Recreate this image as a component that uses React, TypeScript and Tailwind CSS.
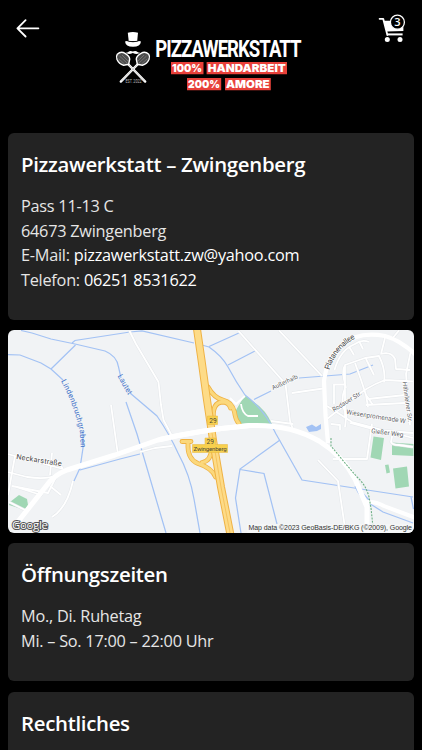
import React from "react";

const Logo = () => {
  return (
    <svg width="210" height="80" viewBox="100 20 210 80" className="block">
      {/* top hat and moustache */}
      <g fill="#fff">
        <path d="M127.8 32.8 Q132.8 31.2 138 32.8 L137.2 41 H128.7 Z" />
        <path d="M125 41.4 Q127 40.4 128.2 41.4 Q133 42.8 137.6 41.4 Q139 40.4 141 41.4 Q140.4 46.6 133 46.8 Q125.6 46.6 125 41.4 Z" />
        <path d="M132.8 51.6 Q135.5 50 137.6 52 Q138.4 53 140.4 52.8 Q137 55 132.8 53 Q128.6 55 125.4 52.8 Q127.4 53 128.2 52 Q130.2 50 132.8 51.6 Z" />
      </g>
      <path d="M128.6 41.2 Q133 42.4 137.4 41.2" fill="none" stroke="#222" strokeWidth=".7" />
      {/* crossed pizza peels */}
      <g stroke="#fff" strokeWidth="2.4" strokeLinecap="round">
        <path d="M127.5 63.5 L145.2 81.6" />
        <path d="M138.5 63.5 L120.8 81.6" />
      </g>
      <path d="M127.6 63.8 L144.6 81.1 M138.4 63.8 L121.4 81.1" stroke="#777" strokeWidth=".4" />
      <g fill="#4d4d4d" stroke="#fff" strokeWidth="1.4" strokeLinejoin="round">
        <path d="M117.3 54.2 Q121 50.8 125 53.4 Q129.5 56 129.7 59 L128.7 64.2 L123.6 65.2 Q119 64 117 59.5 Q115.8 56.3 117.3 54.2 Z" />
        <path d="M148.7 54.2 Q145 50.8 141 53.4 Q136.5 56 136.3 59 L137.3 64.2 L142.4 65.2 Q147 64 149 59.5 Q150.2 56.3 148.7 54.2 Z" />
      </g>
      <path
        d="M119.5 56 L127 63 M122 55 L128 61 M119 59 L124.5 64 M146.5 56 L139 63 M144 55 L138 61 M147 59 L141.5 64"
        stroke="#8b8b8b"
        strokeWidth=".6"
      />
      <text transform="translate(125.4 83.4) scale(.8 1)" fontSize="4.6" fill="#bbb" fontFamily="Roboto, sans-serif">
        EST. 2022
      </text>
      <text transform="translate(155.2 56.6) scale(.75 1)" fontSize="24.8" fontWeight="700" textLength="195" fill="#fff" fontFamily="Roboto, sans-serif">
        PIZZAWERKSTATT
      </text>
      <g fill="#e8413a">
        <path d="M171 62 H203.5 V74.2 H171 Z M206.6 62 H287 V74.2 H206.6 Z" />
        <path d="M187 78 H221.2 V90.2 H187 Z M225 78 H270.8 V90.2 H225 Z" />
      </g>
      <g fill="#fff" fontSize="10.8" fontWeight="900" fontFamily="Inter, sans-serif">
        <text x="172" y="72.1" textLength="30" lengthAdjust="spacingAndGlyphs">100%</text>
        <text x="207.8" y="72.1" textLength="78" lengthAdjust="spacingAndGlyphs">HANDARBEIT</text>
        <text x="188" y="88" textLength="32" lengthAdjust="spacingAndGlyphs">200%</text>
        <text x="226" y="88" textLength="43.6" lengthAdjust="spacingAndGlyphs">AMORE</text>
      </g>
    </svg>
  );
};

const Cart = () => {
  return (
    <svg width="30" height="32" viewBox="377 12 30 32" className="block">
      <path d="M379.6 18.8 H383.2 L387.4 35" fill="none" stroke="#fff" strokeWidth="1.8" strokeLinecap="round" strokeLinejoin="round" />
      <path d="M383.6 20.8 H403.4 V31 L386.4 31.4 Z" fill="#fff" />
      <path d="M386.8 34.4 H402.6" stroke="#fff" strokeWidth="2" />
      <circle cx="387.3" cy="39.4" r="2.5" fill="#fff" />
      <circle cx="400" cy="39.4" r="2.5" fill="#fff" />
      <circle cx="397.4" cy="22.2" r="7" fill="#000" stroke="#fff" strokeWidth="1.3" />
      <text x="397.4" y="26.2" fontSize="11" fontWeight="600" textAnchor="middle" fill="#fff" fontFamily="Open Sans, sans-serif">
        3
      </text>
    </svg>
  );
};

const MINOR_ROADS =
  "M129.5 331 L136 344 L158.5 382 L161 405 L163.5 420 L172.5 437 M111 405 L118 455" +
  " M238.5 331 L285.5 384 L290 421 L292.5 428 M279 330.5 L322 376 M292 393 L323 388.5 M271 421 L293 424" +
  " M334.5 370 Q340 350 355 344 Q362 339 369 342 M349 346.5 L354 355 M359 341 L363 349" +
  " M345 417 V375 L345 365 L365 358 L379 356 Q386 370 384 382 M345 388 Q340 400 345 412 M334 384.5 H345 M346 388 Q341 370 345 366" +
  " M355 363 Q361 379 366 395 L373 405 M366 359 L374 375 M334 384 V404" +
  " M327 419 L350 401 Q366 387 385 380 L413 381.5 M385 338 L381 354 M381 354 Q391 351 395 359 L396 369 L410 370 M411 350 L406 374 L410 425" +
  " M368 399 L405 395 M366 405 L405 403 M366 395 L368 407 M327 406 L352 422 L413 438 M347 410 L345 427 M350 423 L376 430 L413 433" +
  " M391 340 L399 330.5 M331 424 L340 425 V430 M372 424 L367 459 H333 M393 432 L391 442 Q392 445 399 445 L413 447" +
  " M318 460 L338 481 L345 528";

const WEST_ROADS =
  "M8 454 L15 456 L63 469 M8 472 L27 477 Q47 480 57 475 M15 456 L8 495 M12 486 L48 493 L56 477 M52 453 L50 475" +
  " M13 486 L41 495 L48 484 M50 486 L61 495 M63 469 L57 460 M9 502 L25 510 M73 481 Q67 508 52 517" +
  " M140 452 L155 448 L172 446";

const RAMPS_NORTH = "M208 387 Q214 398 223 400 Q232 402 234.5 412 Q235.5 420 239 423.5 M213.5 419 Q212 403 222 402 Q229 402 230.5 408";
const RAMPS_SOUTH = "M182 441.5 H191 M188 443 Q187 459 198 463.5 Q212 468 215.5 477 M211.5 449 Q211 461 202 462.5";

const Map = () => {
  return (
    <svg viewBox="8 330 406 203" className="block h-[203px] w-full rounded-md bg-[#f1f3f5]">
      {/* green areas */}
      <g fill="#a0d7b4">
        <path d="M245 395 L254 402 Q266 410 272 424 Q254 423 241 425 L233 415 Z" />
        <path d="M10 502 L19 495 L27 499 L28 505 L25 510 L9 505 Z" />
        <path d="M373.5 436.5 L384 438 L381 460 L370.5 457.5 Z M392 442.5 L413.5 444 V456 L392 455 Z M385 465 L388.5 464.5 L390 472.5 L386.5 473.5 Z M393 468.5 L407 466.5 L409 486.5 L395.5 488.5 Z" />
      </g>

      {/* streams */}
      <g fill="none" stroke="#a3c2f4" strokeWidth="1.25">
        <path d="M21 330.5 L32 333 L51 339 L75 344 L105 351 Q117 356 118.5 367 L121 378 M130 393 L157 416 Q170 435 178 453 Q190 475 194 499 L200 533" />
        <path d="M8 354.5 L20 355 L41 363 L51 369 L63 380 M83 433 V448 L80 468 L74 481 M80 470 L120 459 L140 454" />
        <path d="M51 369 L75.5 345 M72 343 L75 340.5 L130 332 L142 331 L194 343 M200 344.5 L209 347 Q222 356 228 367 Q236 382 245 395 Q265 410 276 434 L280 441 L302 480 L413 497" />
        <path d="M209 346.5 L240 332.5 M228 365 L255 351 M126 402 L137 434 L166 533 M280 440 L240 469 L235.5 498 L241 533 M240 469.5 L264 473.5 L277 524" />
        <path d="M254 399.5 L271 391 M299 378 L325 376 L350 374 L373 365 M411 497 L413.5 509 M355 486 Q360 499 372 505 L383 512 L413 523 M358 488 L369 500" />
      </g>
      <path d="M306 427 L312 424.5 L316 427 L321 424 V429 L317 431 L309 432 Z" fill="#a3c2f4" />

      {/* local roads, casing below the fill */}
      <g fill="none" strokeLinejoin="round">
        <path d={MINOR_ROADS} stroke="#e4e7ea" strokeWidth="2.8" />
        <path d={WEST_ROADS} stroke="#e4e7ea" strokeWidth="2.8" />
        <path d={MINOR_ROADS} stroke="#fff" strokeWidth="1.8" />
        <path d={WEST_ROADS} stroke="#fff" strokeWidth="1.8" />
        <path d="M241 404 Q242 413 248 416 H258 M230 398 L236 404 L245 396" stroke="#fff" strokeWidth="1.8" />
      </g>

      {/* main roads */}
      <g fill="none" stroke="#fff" strokeLinejoin="round">
        <path d="M13 528 L47 485 Q54 475 67 470 L115 455 L158 440 Q200 430 250 425.5 Q290 424 319 441 Q343 456 355 479 L367 507 V533" strokeWidth="5" />
        <path d="M328 443 L325.5 415 L324 381 Q327 358 342 345 Q358 331 385 336 Q400 340 416 355" strokeWidth="4.2" />
        <path d="M363 503 Q373 500 384 506 L416 518" strokeWidth="4" />
      </g>
      <path d="M331 438 V446 L345 463 L357 477 Q366 485 369 497 L371 508 L373 527" fill="none" stroke="#6fb086" strokeWidth="1.1" strokeDasharray="2 1.2" />

      {/* slip roads of junction 29 */}
      <g fill="none" strokeLinecap="round">
        <path d={RAMPS_NORTH} stroke="#efb244" strokeWidth="4.8" />
        <path d={RAMPS_SOUTH} stroke="#efb244" strokeWidth="4.8" />
        <path d={RAMPS_NORTH} stroke="#fbd87c" strokeWidth="3.2" />
        <path d={RAMPS_SOUTH} stroke="#fbd87c" strokeWidth="3.2" />
      </g>

      {/* motorway */}
      <g fill="none">
        <path d="M197 329 L201.5 360 L207 400 L213 440 L221 487 L230.5 535" stroke="#efb244" strokeWidth="8" />
        <path d="M197 329 L201.5 360 L207 400 L213 440 L221 487 L230.5 535" stroke="#fddb87" strokeWidth="6" />
        <path d="M212 433 L221 487 L230.5 535" stroke="#f3bd55" strokeWidth=".8" />
      </g>
      <path d="M160 439.5 Q200 430 250 425.5" fill="none" stroke="#fff" strokeWidth="5" />
      <path d="M207.5 416 H217.5 V424.5 H207.5 Z M205 438 H215.5 V444.5 H227.5 V452.5 H192.5 V444.5 H205 Z" fill="#f8d04d" stroke="#e6b63c" strokeWidth=".5" />

      {/* labels */}
      <g fontFamily="Roboto, sans-serif" fontSize="6.6" fill="#4d4a3a">
        <text x="209.2" y="422.8">29</text>
        <text x="206.6" y="443.6">29</text>
        <text x="193.6" y="450.8" fontSize="6.1" textLength="33">Zwingenberg</text>
      </g>
      <defs>
        <path id="lindenbruch" d="M61 381 Q75 407 80 433 L81 452" />
        <path id="platanen" d="M329.5 370 Q335 349 359 336" />
      </defs>
      <g fontFamily="Roboto, sans-serif" fontSize="7.6" fill="#3c70c8">
        <text><textPath href="#lindenbruch" textLength="70">Lindenbruchgraben</textPath></text>
        <text transform="translate(117.5 376) rotate(61)" textLength="22">Lautet</text>
      </g>
      <g fontFamily="Roboto, sans-serif" fontSize="7" fill="#5c6064" stroke="#fff" strokeWidth="1.2" paintOrder="stroke">
        <text transform="translate(16 459) rotate(9)" fontSize="7.4" fill="#444" textLength="46">Neckarstraße</text>
        <text fontSize="7.8" fill="#444"><textPath href="#platanen" textLength="42">Platanenallee</textPath></text>
        <text transform="translate(273 390) rotate(-25)" fontSize="6.4" textLength="28">Außerhalb</text>
        <text transform="translate(334 412) rotate(-32)" fontSize="6.4" textLength="33">Rodauer Str.</text>
        <text transform="translate(346 414) rotate(9)" fontSize="6.6" textLength="60">Wiesenpromenade W</text>
        <text transform="translate(371 433) rotate(7)" fontSize="6.6" textLength="32.5">Gießer Weg</text>
        <text transform="translate(402.5 382) rotate(82)" fontSize="6.4" textLength="41">Hähnleiner Str.</text>
      </g>
      <path d="M247 524 H414 V533 H247 Z" fill="#f5f6f7" fillOpacity=".8" />
      <text x="248.5" y="530.4" fontSize="7" fill="#333" textLength="163.5" fontFamily="Liberation Sans, Arial, sans-serif">
        Map data ©2023 GeoBasis-DE/BKG (©2009), Google
      </text>
      <text x="12" y="529" fontSize="11.5" fontWeight="500" fill="#fff" stroke="#555" strokeWidth="2" paintOrder="stroke" textLength="36" fontFamily="Open Sans, sans-serif">
        Google
      </text>
    </svg>
  );
};

type CardProps = {
  title: string;
  className: string;
  children?: React.ReactNode;
};

const Card = ({ title, className, children }: CardProps) => {
  return (
    <section className={`rounded-md bg-[#232323] px-[13px] pt-4 ${className}`}>
      <h2 className="text-[20.4px] leading-[30px] font-semibold tracking-[-0.3px] text-white">{title}</h2>
      <div className="mt-[15px] text-[16.3px] leading-[24.5px] tracking-[-0.25px] text-[#e6e6e6]">{children}</div>
    </section>
  );
};

const App = () => {
  return (
    <div className="h-[750px] overflow-hidden bg-black font-['Open_Sans',sans-serif] whitespace-nowrap">
      <header className="flex h-[133px] items-start justify-between pr-[15px] pl-4">
        <svg width="24" height="20" viewBox="16 18 24 20" className="mt-[18px] block" fill="none" stroke="#fff" strokeWidth="1.8" strokeLinecap="round" strokeLinejoin="round">
          <path d="M38.4 28.3 H17.4 M25.6 20.1 L17.4 28.3 L25.6 36.5" />
        </svg>
        <div className="mt-5 mr-auto ml-[60px]">
          <Logo />
        </div>
        <div className="mt-3">
          <Cart />
        </div>
      </header>
      <main className="flex flex-col gap-2.5 px-2">
        <Card title="Pizzawerkstatt – Zwingenberg" className="h-[187px]">
          <p>Pass 11-13 C</p>
          <p>64673 Zwingenberg</p>
          <p>
            E-Mail: <a className="text-white">pizzawerkstatt.zw@yahoo.com</a>
          </p>
          <p>
            Telefon: <a className="text-white">06251 8531622</a>
          </p>
        </Card>
        <Map />
        <Card title="Öffnungszeiten" className="h-[138px]">
          <p>Mo., Di. Ruhetag</p>
          <p>Mi. – So. 17:00 – 22:00 Uhr</p>
        </Card>
        <Card title="Rechtliches" className="mt-px h-[138px]" />
      </main>
    </div>
  );
};

export default App;
